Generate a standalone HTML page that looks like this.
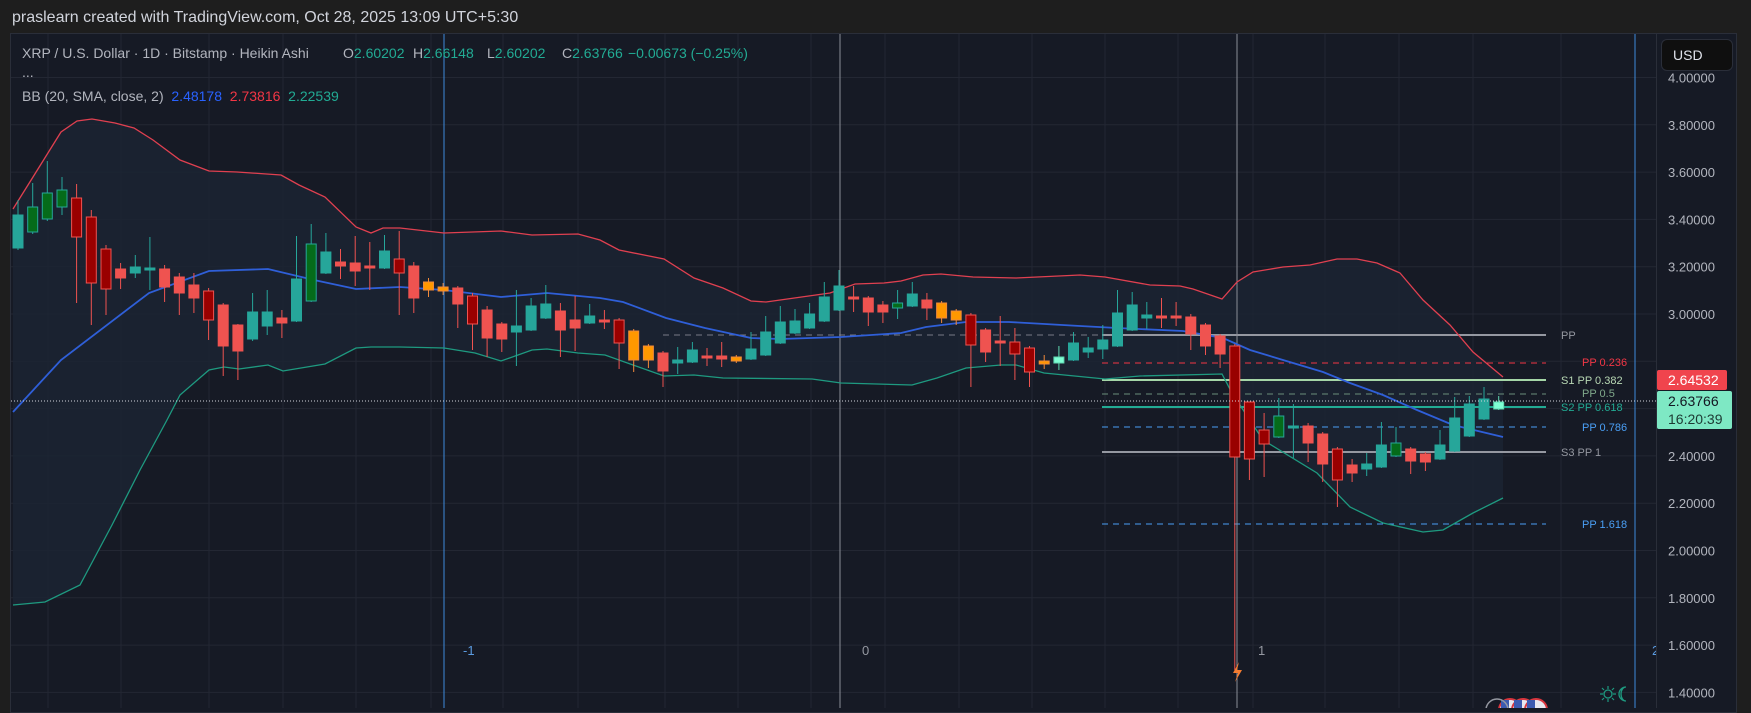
<!DOCTYPE html>
<html><head><meta charset="utf-8">
<style>
html,body{margin:0;padding:0;width:1751px;height:708px;overflow:hidden;background:#1e1e1e;font-family:"Liberation Sans",sans-serif;}
#hdr{position:absolute;left:12px;top:9px;font-size:16px;color:#d1d4dc;white-space:nowrap;}
#panel{position:absolute;left:10px;top:33px;width:1727px;height:680px;background:#161a25;border:1px solid #2a2e39;box-sizing:border-box;}
svg{position:absolute;left:0;top:0;}
.leg{position:absolute;left:22px;font-size:14px;color:#b2b5be;white-space:nowrap;}
.a{position:absolute;top:45px;font-size:14px;color:#b2b5be;white-space:nowrap;}
.v{color:#22ab94}
#usd{position:absolute;left:1661px;top:39px;width:72px;height:32px;box-sizing:border-box;background:#0f0f0f;border:1px solid #2a2e39;border-radius:6px;color:#e0e3eb;font-size:14px;line-height:30px;padding-left:11px;}
</style></head><body>
<div id="hdr">praslearn created with TradingView.com, Oct 28, 2025 13:09 UTC+5:30</div>
<div id="panel"></div>
<svg id="s" width="1751" height="708"></svg>
<div class="leg" style="top:45px">XRP / U.S. Dollar · 1D · Bitstamp · Heikin Ashi</div>
<div class="a" style="left:343px">O<span class="v">2.60202</span></div>
<div class="a" style="left:413px">H<span class="v">2.66148</span></div>
<div class="a" style="left:487px">L<span class="v">2.60202</span></div>
<div class="a" style="left:562px">C<span class="v">2.63766</span></div>
<div class="a" style="left:628px"><span class="v">−0.00673 (−0.25%)</span></div>
<div class="leg" style="top:64px">...</div>
<div class="leg" style="top:88px">BB (20, SMA, close, 2)&nbsp; <span style="color:#2962ff">2.48178</span>&nbsp; <span style="color:#f23645">2.73816</span>&nbsp; <span style="color:#22ab94">2.22539</span></div>
<div id="usd">USD</div>
<script>
var Y=function(p){return 314-(p-3)*236.5;};
var o='<defs><clipPath id="cp"><rect x="11" y="34" width="1645" height="674"/></clipPath></defs>';
var g='';
for(var p=1.4;p<=4.01;p+=0.2){var y=Y(p).toFixed(1);g+='<line x1="11" x2="1656" y1="'+y+'" y2="'+y+'" stroke="#232733" stroke-width="1"/>';}
[48,121,209,283,356,431,503,578,665,738,811,885,959,1032,1105,1178,1253,1325,1399,1473,1561].forEach(function(x){g+='<line x1="'+x+'" x2="'+x+'" y1="34" y2="708" stroke="#232733"/>';});
o+='<g clip-path="url(#cp)">'+g;
var U=[[13,209],[33,177],[61,132],[77,121],[92,119],[115,123],[134,128],[153,140],[180,160],[209,171],[237,172],[281,175],[299,185],[325,197],[356,227],[371,233],[383,228],[400,228],[444,233],[501,231],[532,235],[578,234],[600,240],[619,250],[664,259],[694,278],[723,288],[751,301],[766,302],[830,293],[855,284],[884,283],[901,281],[923,275],[941,274],[973,277],[1016,278],[1080,275],[1105,277],[1150,285],[1180,286],[1193,289],[1222,299],[1237,282],[1253,272],[1283,267],[1310,265],[1337,259],[1357,259],[1377,263],[1400,273],[1423,300],[1450,325],[1473,352],[1503,377]];
var M=[[13,412],[61,360],[149,293],[209,271],[268,269],[314,280],[356,289],[400,287],[444,290],[501,297],[547,293],[600,298],[623,302],[666,318],[705,328],[751,338],[780,339],[841,337],[901,333],[926,327],[966,322],[1009,322],[1080,326],[1117,328],[1183,331],[1223,338],[1250,350],[1283,360],[1323,372],[1350,383],[1383,395],[1417,410],[1453,425],[1503,437]];
var L=[[13,605],[45,602],[80,585],[112,525],[140,470],[167,420],[180,395],[209,370],[224,367],[239,369],[268,365],[283,371],[325,364],[356,348],[371,347],[400,347],[444,348],[475,353],[501,361],[532,350],[547,349],[578,353],[605,355],[664,376],[694,375],[723,378],[812,379],[841,383],[912,385],[937,378],[966,368],[1001,365],[1016,365],[1044,373],[1105,379],[1140,376],[1222,374],[1232,393],[1263,440],[1317,473],[1350,507],[1383,523],[1423,532],[1443,530],[1473,513],[1503,498]];
function pts(a){return a.map(function(q){return q[0]+','+q[1];}).join(' ');}
o+='<polygon points="'+pts(U)+' '+pts(L.slice().reverse())+'" fill="#1b2433" opacity="0.85"/>';
function hl(x1,x2,y,c,w,d){return '<line x1="'+x1+'" x2="'+x2+'" y1="'+y+'" y2="'+y+'" stroke="'+c+'" stroke-width="'+w+'"'+(d?' stroke-dasharray="6,5"':'')+'/>';}
o+=hl(663,1102,335,'#787b86',1,1);
o+=hl(1102,1546,335,'#9598a1',2,0);
o+=hl(1102,1546,363,'#f23645',1,1);
o+=hl(1102,1546,380,'#a5d6a7',2,0);
o+=hl(1102,1546,394,'#6a8f7a',1,1);
o+=hl(1102,1546,407,'#22ab94',2,0);
o+=hl(1102,1546,427,'#4a9ff5',1,1);
o+=hl(1102,1546,452,'#9598a1',2,0);
o+=hl(1102,1546,524,'#4a9ff5',1,1);
o+='<line x1="444" x2="444" y1="34" y2="708" stroke="#3d8bdc"/>';
o+='<line x1="840" x2="840" y1="34" y2="708" stroke="#8a8d96"/>';
o+='<line x1="1237" x2="1237" y1="34" y2="708" stroke="#8a8d96"/>';
o+='<line x1="1635" x2="1635" y1="34" y2="708" stroke="#3d8bdc"/>';
o+='<polyline points="'+pts(U)+'" fill="none" stroke="#e04050" stroke-width="1.3"/>';
o+='<polyline points="'+pts(L)+'" fill="none" stroke="#1e9a80" stroke-width="1.3"/>';
o+='<polyline points="'+pts(M)+'" fill="none" stroke="#2f5fd8" stroke-width="1.8"/>';
var C=[['t',215,248,200,250],['g',207,232,183,234],['g',193,219,161,221],['g',190,207,177,215],['d',198,237,184,303],['d',217,283,210,325],['d',249,289,245,315],['r',269,278,263,289],['t',267,273,255,278],['t',268,270,237,290],['r',269,287,265,302],['r',277,293,273,315],['r',285,298,273,313],['d',291,320,288,340],['r',305,346,303,376],['r',325,351,324,380],['t',312,339,293,341],['t',312,326,290,335],['r',318,323,310,338],['t',279,321,236,322],['g',244,301,224,302],['t',252,273,233,274],['r',262,266,249,279],['r',263,271,236,286],['r',266,267,242,290],['t',251,268,235,269],['d',259,273,231,315],['r',266,298,262,313],['o',282,290,278,297],['o',287,291,283,295],['r',288,304,286,328],['d',296,324,293,350],['r',310,338,306,357],['r',324,339,322,352],['t',326,332,290,366],['t',306,330,298,331],['t',304,318,285,319],['r',311,330,303,357],['r',320,328,296,351],['t',316,323,304,324],
['r',320,322,310,329],['d',320,343,318,369],['o',331,360,329,372],['o',346,360,344,368],['r',353,371,351,387],['t',360,363,347,374],['t',350,362,342,363],['r',356,358,348,366],['r',356,359,342,367],['o',357,361,355,363],['t',349,359,332,360],['t',332,355,316,356],['t',322,343,306,344],['t',321,333,309,334],['t',314,328,303,329],['t',297,321,282,322],['t',286,310,270,311],['r',297,299,286,312],['r',298,312,296,326],['r',305,312,301,323],['g',303,308,290,319],['t',294,306,282,307],['r',300,308,293,320],['o',303,318,301,323],['o',311,320,309,325],['d',315,345,313,387],['r',330,352,328,362],['r',341,343,316,366],['d',342,354,328,380],['d',348,372,346,387],['o',361,364,355,369],['m',357,363,346,370],
['t',343,360,332,361],['t',348,352,337,358],['t',340,349,325,359],['t',313,346,290,347],['t',305,330,292,331],['t',315,318,302,329],['r',316,317,298,328],['r',316,317,302,326],['r',317,334,314,350],['r',325,346,323,355],['r',336,354,334,368],['d',346,457,344,670],['d',402,459,402,480],['d',430,444,413,477],['g',416,437,398,438],['t',426,427,404,458],['r',426,443,423,462],['r',434,464,432,482],['d',449,480,447,507],['r',465,473,459,482],['t',464,469,453,476],['t',445,467,422,468],['g',443,456,427,457],['r',449,461,447,474],['r',454,462,452,471],['t',445,459,430,460],['t',418,451,397,452],['t',404,436,396,437],['t',399,419,387,420],['m',402,409,396,410]];
var col={t:['#26a69a','#26a69a'],g:['#056b1a','#26a69a'],d:['#990000','#ef5350'],r:['#ef5350','#ef5350'],o:['#ff9800','#f28a3a'],m:['#7fffd4','#5fd6b0']};
C.forEach(function(c,i){var x=18+14.66*i;var k=col[c[0]];var h=Math.max(c[2]-c[1],2);
o+='<line x1="'+x.toFixed(1)+'" x2="'+x.toFixed(1)+'" y1="'+c[3]+'" y2="'+c[4]+'" stroke="'+k[1]+'" stroke-width="1"/>';
o+='<rect x="'+(x-5).toFixed(1)+'" y="'+c[1]+'" width="10" height="'+h+'" fill="'+k[0]+'" stroke="'+k[1]+'" stroke-width="1"/>';});
o+='<line x1="11" x2="1656" y1="401" y2="401" stroke="#d1d4dc" stroke-width="1" stroke-dasharray="1,2"/>';
o+='<text x="463" y="655" font-size="13" fill="#5b9be0" font-family="Liberation Sans">-1</text>';
o+='<text x="862" y="655" font-size="13" fill="#9598a1" font-family="Liberation Sans">0</text>';
o+='<text x="1258" y="655" font-size="13" fill="#9598a1" font-family="Liberation Sans">1</text>';
o+='<text x="1652" y="655" font-size="13" fill="#5b9be0" font-family="Liberation Sans">2</text>';
function tl(x,y,t,c){return '<text x="'+x+'" y="'+(y+4)+'" font-size="11" fill="'+c+'" font-family="Liberation Sans">'+t+'</text>';}
o+=tl(1561,335,'PP','#9598a1');
o+=tl(1582,362,'PP 0.236','#f23645');
o+=tl(1561,380,'S1 PP 0.382','#b8d8b4');
o+=tl(1582,393,'PP 0.5','#7fa88a');
o+=tl(1561,407,'S2 PP 0.618','#22ab94');
o+=tl(1582,427,'PP 0.786','#4a9ff5');
o+=tl(1561,452,'S3 PP 1','#9598a1');
o+=tl(1582,524,'PP 1.618','#4a9ff5');
o+='<path d="M1239,662 L1233,673 L1238,673 L1235,682 L1242,670 L1237,670 Z" fill="#f57c30"/>';
[1510,1523,1536].forEach(function(x){o+='<circle cx="'+x+'" cy="710" r="11" fill="#e8e8f0" stroke="#d9363e" stroke-width="2"/><rect x="'+(x-9)+'" y="700" width="8" height="8" fill="#3c5ab0"/>';});
o+='<circle cx="1497" cy="710" r="11" fill="none" stroke="#9598a1" stroke-width="1.5"/>';
o+='<circle cx="1608" cy="694" r="4" fill="none" stroke="#1e9a80" stroke-width="1.3"/><path d="M1608,686v3M1608,699v3M1600,694h3M1613,694h3M1602,688l2,2M1612,698l2,2M1614,688l-2,2M1604,698l-2,2" stroke="#1e9a80" stroke-width="1.2"/><path d="M1626,687 a7,7 0 1,0 0,14 a5,7 0 1,1 0,-14z" fill="none" stroke="#1e9a80" stroke-width="1.3"/>';
o+='</g>';
o+='<line x1="1656.5" x2="1656.5" y1="34" y2="708" stroke="#2a2e39"/>';
var a='';
for(var p=1.4;p<=4.01;p+=0.2){var y=Y(p);if(Math.abs(y-380)<22||Math.abs(y-410)<20)continue;a+='<text x="1668" y="'+(y+5).toFixed(1)+'" font-size="13" fill="#b2b5be" font-family="Liberation Sans">'+p.toFixed(5)+'</text>';}
o+=a;
o+='<rect x="1657" y="370" width="70" height="20" rx="2" fill="#f0444d"/><text x="1668" y="385" font-size="14" fill="#ffffff" font-family="Liberation Sans">2.64532</text>';
o+='<rect x="1657" y="391" width="75" height="38" rx="2" fill="#7ee8c4"/><text x="1668" y="406" font-size="14" fill="#131722" font-family="Liberation Sans">2.63766</text><text x="1668" y="424" font-size="14" fill="#1d3a33" font-family="Liberation Sans">16:20:39</text>';
document.getElementById('s').innerHTML=o;
</script>
</body></html>
